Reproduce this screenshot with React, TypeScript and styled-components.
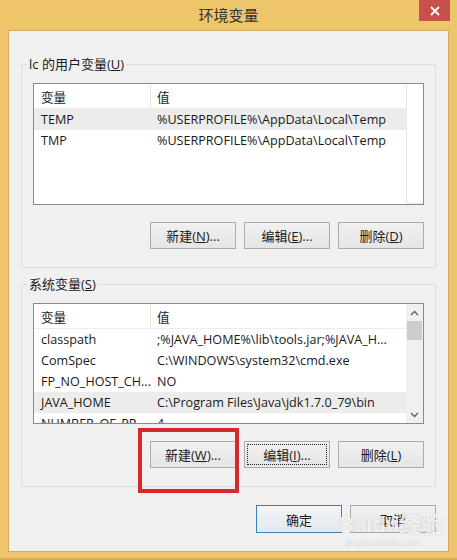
import React from 'react';
import styled, { createGlobalStyle } from 'styled-components';

const Global = createGlobalStyle`
  html, body { margin: 0; padding: 0; background: #efc56b; }
  * { box-sizing: border-box; }
`;

const UI_FONT = `"Open Sans", "Noto Sans CJK SC", sans-serif`;

const Window = styled.div`
  position: relative;
  width: 457px;
  height: 560px;
  background: #efc56b;
  border-bottom: 2px solid #d9aa4f;
  font-family: ${UI_FONT};
  font-size: 12px;
  color: #1a1a1a;
`;

const TitleBar = styled.div`
  height: 30px;
  display: grid;
  grid-template-columns: 1fr auto 1fr;
  align-items: start;
`;

const Title = styled.div`
  grid-column: 2;
  font-family: "Noto Sans CJK SC", sans-serif;
  font-size: 15px;
  line-height: 30px;
  color: #333;
`;

const CloseButton = styled.div`
  grid-column: 3;
  justify-self: end;
  margin-right: 7px;
  width: 31px;
  height: 21px;
  background: #c7504d;
  display: flex;
  align-items: center;
  justify-content: center;
`;

const Client = styled.div`
  margin: 0 8px;
  height: 522px;
  background: #f0f0f0;
  border: 1px solid #d2ad5f;
  padding: 24px 12px 0 12px;
`;

const Group = styled.fieldset<{ $top?: number }>`
  margin: ${({ $top }) => $top ?? 0}px 0 0 0;
  padding: 10px 11px 18px 11px;
  border: 1px solid #dcdcdc;
  min-width: 0;
`;

const Legend = styled.legend`
  margin-left: -6px;
  padding: 0 2px;
  font-size: 13px;
  line-height: 18px;
  color: #1a1a1a;
`;

const List = styled.div<{ $h: number }>`
  height: ${({ $h }) => $h}px;
  border: 1px solid #8a8a8a;
  background: #fff;
  display: flex;
  overflow: hidden;
`;

const Table = styled.div`
  width: 372px;
  display: flex;
  flex-direction: column;
`;

const Row = styled.div<{ $head?: boolean; $sel?: boolean }>`
  display: grid;
  grid-template-columns: 117px 255px;
  height: ${({ $head }) => ($head ? 25 : 21)}px;
  flex-shrink: 0;
  align-items: center;
  font-size: 12.6px;
  background: ${({ $sel }) => ($sel ? '#ececec' : '#fff')};
  border-bottom: ${({ $head }) => ($head ? '1px solid #ececec' : 'none')};
`;

const Cell = styled.div<{ $head?: boolean; $first?: boolean }>`
  height: 100%;
  display: flex;
  align-items: center;
  padding-left: ${({ $first }) => ($first ? 7 : 6)}px;
  white-space: nowrap;
  border-right: ${({ $head, $first }) => ($head && $first ? '1px solid #e5e5e5' : 'none')};
`;

const HeadFill = styled.div`
  flex: 1;
  height: 25px;
  border-left: 1px solid #e5e5e5;
  border-bottom: 1px solid #ececec;
`;

const Filler = styled.div`
  flex: 1;
  display: flex;
  flex-direction: column;
`;

const ScrollBar = styled.div`
  width: 17px;
  background: #f0f0f0;
  display: flex;
  flex-direction: column;
  align-items: center;
`;

const Arrow = styled.div`
  height: 17px;
  width: 17px;
  display: flex;
  align-items: center;
  justify-content: center;
`;

const Thumb = styled.div`
  width: 15px;
  height: 19px;
  background: #cdcdcd;
`;

const Track = styled.div`
  flex: 1;
`;

const ButtonRow = styled.div<{ $top: number }>`
  display: flex;
  justify-content: flex-end;
  gap: 8px;
  margin-top: ${({ $top }) => $top}px;
`;

const Button = styled.div<{ $default?: boolean; $focus?: boolean; $h?: number }>`
  position: relative;
  width: 86px;
  height: ${({ $h }) => $h ?? 27}px;
  border: 1px solid ${({ $default }) => ($default ? '#3c7fb1' : '#acacac')};
  background: ${({ $default }) =>
    $default ? 'linear-gradient(#f2f5f8, #e3e8ee)' : 'linear-gradient(#f0f0f0, #e5e5e5)'};
  display: flex;
  align-items: center;
  justify-content: center;
  font-size: 13px;
  color: #1a1a1a;
  outline: ${({ $focus }) => ($focus ? '1px dotted #222' : 'none')};
  outline-offset: -4px;
`;

const Highlight = styled.div`
  position: absolute;
  left: 138px;
  top: 428px;
  width: 101px;
  height: 65px;
  border: 4px solid #d7282e;
`;

const Watermark = styled.div`
  position: absolute;
  left: 338px;
  top: 512px;
  display: flex;
  flex-direction: column;
  align-items: flex-start;
  white-space: nowrap;
  color: rgba(255, 255, 255, 0.8);
  text-shadow: 0 0 1px rgba(130, 130, 130, 0.45);
  pointer-events: none;
`;

const MarkBig = styled.div`
  font-family: "Liberation Sans", "Noto Sans CJK SC", sans-serif;
  font-size: 22px;
  font-weight: bold;
  line-height: 26px;
`;

const MarkSmall = styled.div`
  font-family: "Liberation Sans", sans-serif;
  font-size: 9px;
  margin-left: 8px;
  color: rgba(255, 255, 255, 0.7);
`;

const userVars = [
  ['TEMP', '%USERPROFILE%\\AppData\\Local\\Temp'],
  ['TMP', '%USERPROFILE%\\AppData\\Local\\Temp'],
];

const sysVars = [
  ['classpath', ';%JAVA_HOME%\\lib\\tools.jar;%JAVA_H...'],
  ['ComSpec', 'C:\\WINDOWS\\system32\\cmd.exe'],
  ['FP_NO_HOST_CH...', 'NO'],
  ['JAVA_HOME', 'C:\\Program Files\\Java\\jdk1.7.0_79\\bin'],
  ['NUMBER_OF_PR...', '4'],
];

function Chevron({ up }: { up?: boolean }) {
  return (
    <svg width="9" height="6" viewBox="0 0 9 6">
      <path d={up ? 'M1 5 L4.5 1.5 L8 5' : 'M1 1 L4.5 4.5 L8 1'} fill="none" stroke="#606060" strokeWidth="1.4" />
    </svg>
  );
}

function VarTable({ rows, sel, scroll }: { rows: string[][]; sel: number; scroll?: boolean }) {
  return (
    <>
      <Table>
        <Row $head>
          <Cell $head $first>变量</Cell>
          <Cell $head>值</Cell>
        </Row>
        {rows.map(([k, v], i) => (
          <Row key={k} $sel={i === sel}>
            <Cell $first>{k}</Cell>
            <Cell>{v}</Cell>
          </Row>
        ))}
      </Table>
      {scroll ? (
        <ScrollBar>
          <Arrow><Chevron up /></Arrow>
          <Thumb />
          <Track />
          <Arrow><Chevron /></Arrow>
        </ScrollBar>
      ) : (
        <Filler>
          <HeadFill />
        </Filler>
      )}
    </>
  );
}

export default function App() {
  return (
    <Window>
      <Global />
      <TitleBar>
        <Title>环境变量</Title>
        <CloseButton>
          <svg width="10" height="10" viewBox="0 0 10 10">
            <path d="M1 1 L9 9 M9 1 L1 9" stroke="#fff" strokeWidth="1.8" />
          </svg>
        </CloseButton>
      </TitleBar>
      <Client>
        <Group>
          <Legend>lc 的用户变量(<u>U</u>)</Legend>
          <List $h={122}>
            <VarTable rows={userVars} sel={0} />
          </List>
          <ButtonRow $top={17}>
            <Button>新建(<u>N</u>)...</Button>
            <Button>编辑(<u>E</u>)...</Button>
            <Button>删除(<u>D</u>)</Button>
          </ButtonRow>
        </Group>
        <Group $top={7}>
          <Legend>系统变量(<u>S</u>)</Legend>
          <List $h={121}>
            <VarTable rows={sysVars} sel={3} scroll />
          </List>
          <ButtonRow $top={17}>
            <Button>新建(<u>W</u>)...</Button>
            <Button $focus>编辑(<u>I</u>)...</Button>
            <Button>删除(<u>L</u>)</Button>
          </ButtonRow>
        </Group>
        <ButtonRow $top={18}>
          <Button $default $h={28}>确定</Button>
          <Button $h={28}>取消</Button>
        </ButtonRow>
      </Client>
      <Highlight />
      <Watermark>
        <MarkBig>Baidu经验</MarkBig>
        <MarkSmall>jingyan.baidu.com</MarkSmall>
      </Watermark>
    </Window>
  );
}
